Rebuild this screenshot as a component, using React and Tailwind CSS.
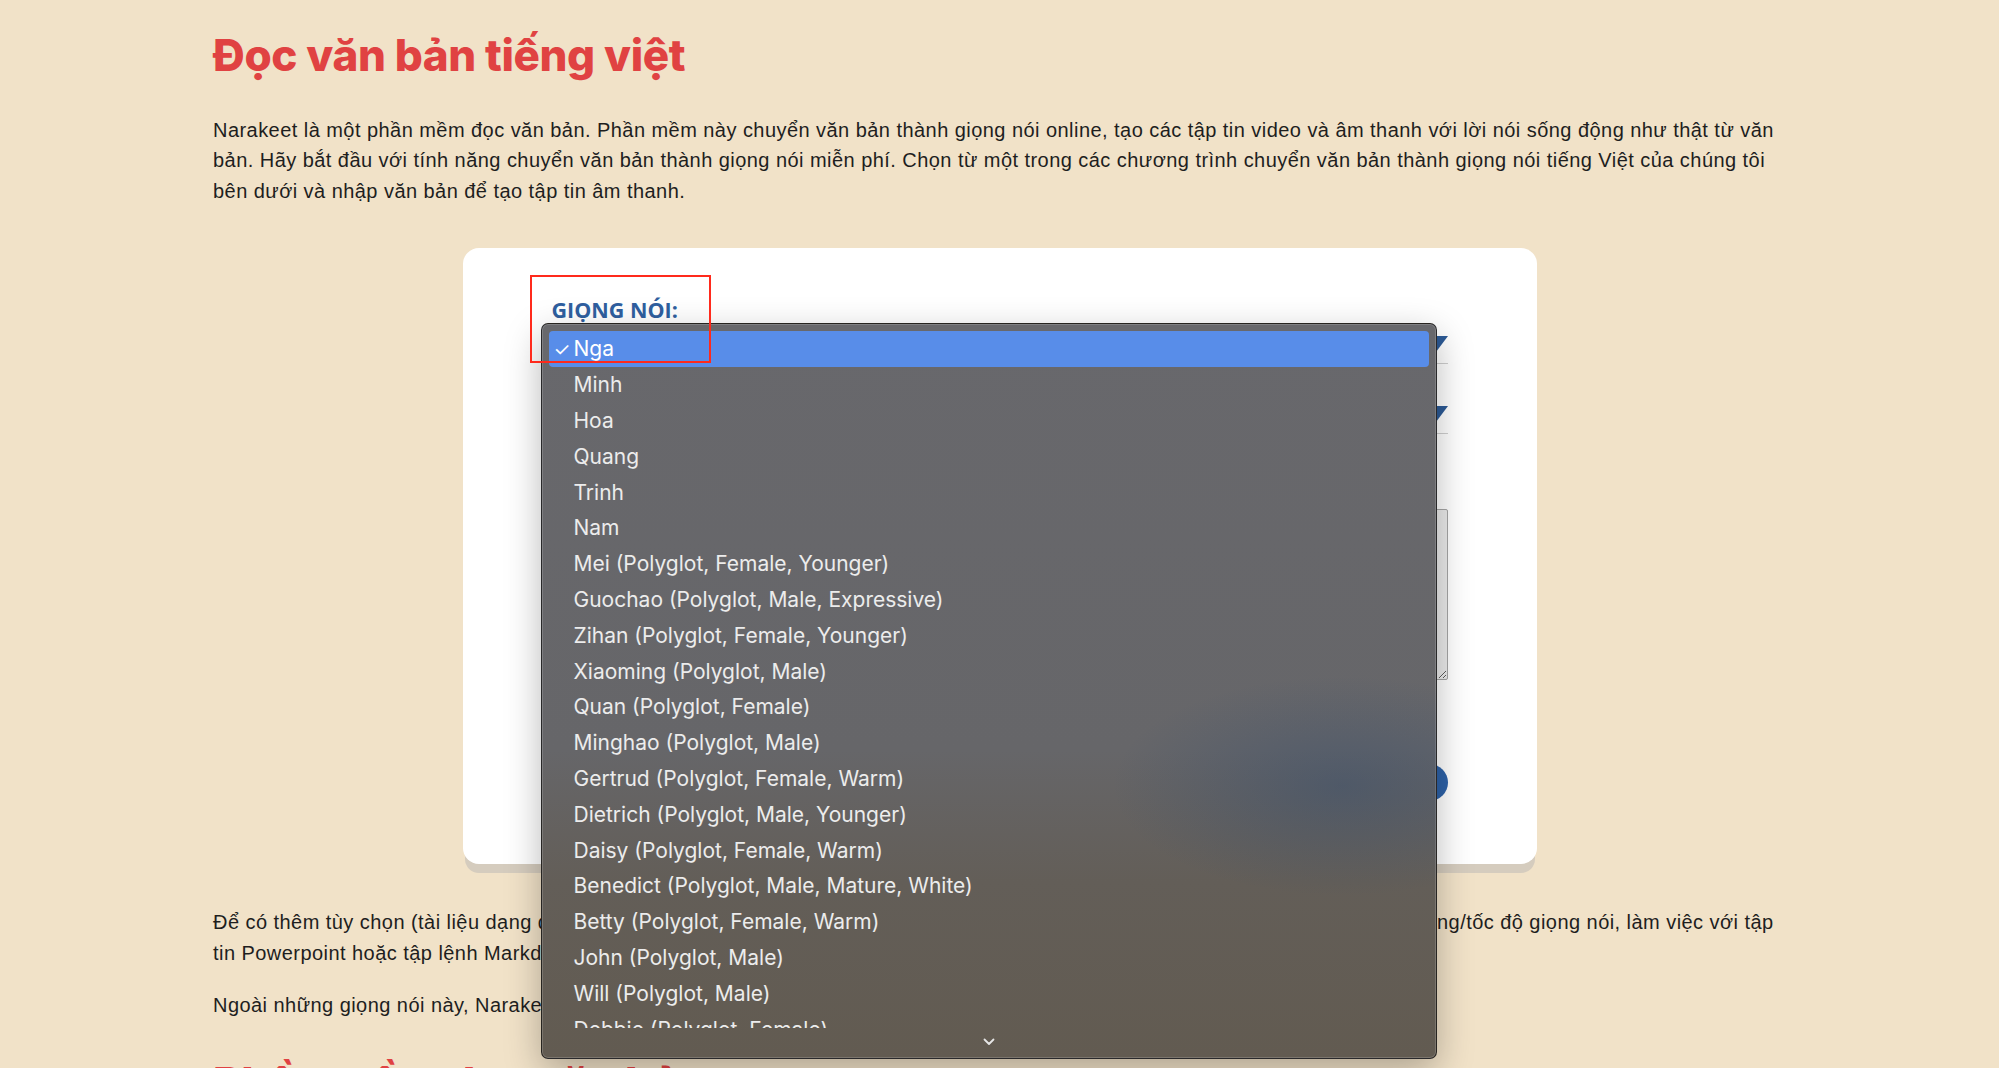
import React from "react";

const voices = [
  "Nga",
  "Minh",
  "Hoa",
  "Quang",
  "Trinh",
  "Nam",
  "Mei (Polyglot, Female, Younger)",
  "Guochao (Polyglot, Male, Expressive)",
  "Zihan (Polyglot, Female, Younger)",
  "Xiaoming (Polyglot, Male)",
  "Quan (Polyglot, Female)",
  "Minghao (Polyglot, Male)",
  "Gertrud (Polyglot, Female, Warm)",
  "Dietrich (Polyglot, Male, Younger)",
  "Daisy (Polyglot, Female, Warm)",
  "Benedict (Polyglot, Male, Mature, White)",
  "Betty (Polyglot, Female, Warm)",
  "John (Polyglot, Male)",
  "Will (Polyglot, Male)",
  "Debbie (Polyglot, Female)",
  "Kasia (Polyglot, Female)",
];

function Triangle() {
  return (
    <svg width="24" height="16" viewBox="0 0 24 16" className="block">
      <path d="M0 0 L24 0 L12 16 Z" fill="#2c5a96" />
    </svg>
  );
}

function SelectBox({ value }) {
  return (
    <div className="flex h-[40px] items-center justify-between border-b border-[#cfcfcf] pl-[4px]">
      <span className="text-[19px] text-[#333]">{value}</span>
      <Triangle />
    </div>
  );
}

function Menu() {
  return (
    <div className="absolute left-[78px] top-[75px] z-10 flex h-[736px] w-[896px] flex-col overflow-hidden rounded-[7px] border border-black/60 bg-[linear-gradient(180deg,#68686c_0%,#666669_58%,#635e58_76%,#625b51_100%)] shadow-[inset_0_0_0_1px_rgba(255,255,255,0.16),0_12px_36px_rgba(0,0,0,0.28)] font-['Inter',sans-serif]">
      <div className="pointer-events-none absolute inset-0 bg-[radial-gradient(ellipse_230px_110px_at_800px_462px,rgba(40,70,110,0.36),rgba(40,70,110,0.16)_55%,transparent_100%)]" />
      <div className="relative h-[704px] overflow-hidden pt-[7px]">
        {voices.map((v, i) => (
          <div
            key={v}
            className={
              i === 0
                ? "mx-[7px] flex h-[35.8px] items-center rounded-[4px] bg-[#588de9] text-[21px] text-white"
                : "mx-[7px] flex h-[35.8px] items-center text-[21px] text-[#ececec]"
            }
          >
            <span className="w-[25px] pl-[5px] text-[19px] leading-none">{i === 0 ? "✓" : ""}</span>
            <span>{v}</span>
          </div>
        ))}
      </div>
      <div className="relative flex flex-1 items-center justify-center pb-[2px]">
        <svg width="12" height="8" viewBox="0 0 12 8">
          <polyline points="1.5,1.5 6,6 10.5,1.5" fill="none" stroke="#e6e6e6" strokeWidth="1.8" strokeLinecap="round" strokeLinejoin="round" />
        </svg>
      </div>
    </div>
  );
}

export default function App() {
  return (
    <div className="min-h-screen bg-[#f1e2c8] font-['Liberation_Sans',Arial,sans-serif] text-[#1e1e1e]">
      <div className="mx-auto w-[1573px] pt-[29px]">
        <h1 className="font-['Inter',sans-serif] text-[44px] font-extrabold leading-[52.8px] tracking-[-0.4px] text-[#e04242]">
          Đọc văn bản tiếng việt
        </h1>
        <p className="mt-[33px] text-[20px] leading-[30.5px] tracking-[0.45px]">
          Narakeet là một phần mềm đọc văn bản. Phần mềm này chuyển văn bản thành giọng nói online, tạo các tập tin video và âm thanh với lời nói sống động như thật từ văn
          <br />
          bản. Hãy bắt đầu với tính năng chuyển văn bản thành giọng nói miễn phí. Chọn từ một trong các chương trình chuyển văn bản thành giọng nói tiếng Việt của chúng tôi
          <br />
          bên dưới và nhập văn bản để tạo tập tin âm thanh.
        </p>

        <div className="relative mx-auto mt-[42px] w-[1074px] rounded-[16px] bg-white px-[89px] pb-[63px] pt-[48px] shadow-[0_11px_0_-2px_#d5ccbe]">
          <div className="font-['Open_Sans',sans-serif] text-[21.5px] font-bold leading-[28px] text-[#2f5f9f]">
            GIỌNG NÓI:
          </div>
          <SelectBox value="Nga" />
          <div className="mt-[30px]">
            <SelectBox value="MP3" />
          </div>
          <div className="mt-[47px] font-['Open_Sans',sans-serif] text-[21.5px] font-bold leading-[28px] text-[#2f5f9f]">
            VĂN BẢN:
          </div>
          <textarea
            className="block h-[171px] w-full resize-y rounded-[2px] border border-[#a5a5a5] bg-[#ebebeb] p-2 text-[19px]"
            defaultValue=""
          />
          <div className="mt-[84px] flex justify-end">
            <button className="h-[37px] w-[260px] rounded-full bg-[#2d62a8] text-[18px] font-bold text-white">
              Tạo âm thanh
            </button>
          </div>

          <Menu />

          <div className="pointer-events-none absolute left-[67px] top-[27px] z-20 h-[88px] w-[181px] border-2 border-[#ff2a1c]" />
        </div>

        <p className="mt-[43px] text-[20px] leading-[31px] tracking-[0.45px]">
          Để có thêm tùy chọn (tài liệu dạng dài, nhiều giọng nói khác nhau trong một tập tin, hơn 90 ngôn ngữ khác nhau, điều chỉnh âm lượng/tốc độ giọng nói, làm việc với tập tin Powerpoint hoặc tập lệnh Markdown), hãy sử dụng các công cụ khác của Narakeet.
        </p>
        <p className="mt-[21px] text-[20px] leading-[31px] tracking-[0.45px]">
          Ngoài những giọng nói này, Narakeet còn có hơn 700 giọng nói khác bằng 100 ngôn ngữ.
        </p>
        <h2 className="mt-[36px] font-['Inter',sans-serif] text-[44px] font-extrabold leading-[52.8px] tracking-[-0.4px] text-[#e04242]">
          Phần mềm đọc văn bản
        </h2>
      </div>
    </div>
  );
}
